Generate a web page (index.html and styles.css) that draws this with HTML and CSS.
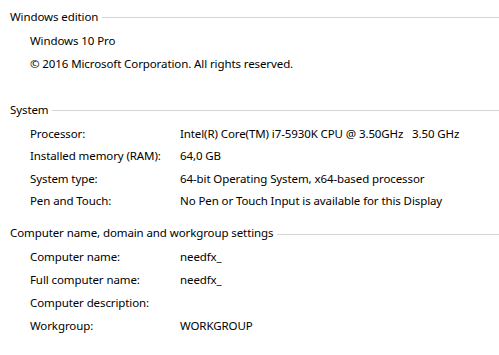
FILE: index.html
```html
<!DOCTYPE html>
<html lang="en">
<head>
  <meta charset="UTF-8">
  <title>System</title>
  <link rel="stylesheet" href="styles.css">
</head>
<body>
  <div class="group group-edition">
    <div class="group-title">Windows edition</div>
    <div class="list">
      <div class="line">Windows 10 Pro</div>
      <div class="line">&copy; 2016 Microsoft Corporation. All rights reserved.</div>
    </div>
  </div>

  <div class="group group-system">
    <div class="group-title">System</div>
    <div class="list">
      <div class="row"><span class="label">Processor:</span><span class="value">Intel(R) Core(TM) i7-5930K CPU @ 3.50GHz&nbsp;&nbsp; 3.50 GHz</span></div>
      <div class="row"><span class="label">Installed memory (RAM):</span><span class="value">64,0 GB</span></div>
      <div class="row"><span class="label">System type:</span><span class="value">64-bit Operating System, x64-based processor</span></div>
      <div class="row"><span class="label">Pen and Touch:</span><span class="value">No Pen or Touch Input is available for this Display</span></div>
    </div>
  </div>

  <div class="group group-computer">
    <div class="group-title">Computer name, domain and workgroup settings</div>
    <div class="list">
      <div class="row"><span class="label">Computer name:</span><span class="value">needfx_</span></div>
      <div class="row"><span class="label">Full computer name:</span><span class="value">needfx_</span></div>
      <div class="row"><span class="label">Computer description:</span><span class="value"></span></div>
      <div class="row"><span class="label">Workgroup:</span><span class="value">WORKGROUP</span></div>
    </div>
  </div>
</body>
</html>
```

FILE: styles.css
```css
body {
  margin: 0;
  padding: 5.5px 0 0 10px;
  background-color: #FFFFFF;
  font-family: "Noto Sans", sans-serif;
  font-size: 11.5px;
  letter-spacing: -0.1px;
  color: #000;
}

.group-title {
  display: flex;
  align-items: center;
  height: 22px;
  line-height: 22px;
  white-space: nowrap;
}

.group-title::after {
  content: "";
  flex: 1;
  height: 1px;
  margin-left: 4px;
  margin-top: 2px;
  background-color: #D5D5D5;
}

.list {
  padding-left: 20px;
}

.line,
.row {
  white-space: nowrap;
}

.row {
  display: flex;
}

.label {
  width: 150px;
  flex-shrink: 0;
}

/* Windows edition */
.group-edition .list {
  margin-top: 2.8px;
}

.group-edition .line {
  height: 22.6px;
  line-height: 22.6px;
}

/* System */
.group-system {
  margin-top: 23.3px;
}

.group-system .list {
  margin-top: 2.4px;
}

.group-system .row {
  height: 22.3px;
  line-height: 22.3px;
}

/* Computer name */
.group-computer {
  margin-top: 9.8px;
}

.group-computer .list {
  margin-top: 0.8px;
}

.group-computer .row {
  height: 23.1px;
  line-height: 23.1px;
}
```
